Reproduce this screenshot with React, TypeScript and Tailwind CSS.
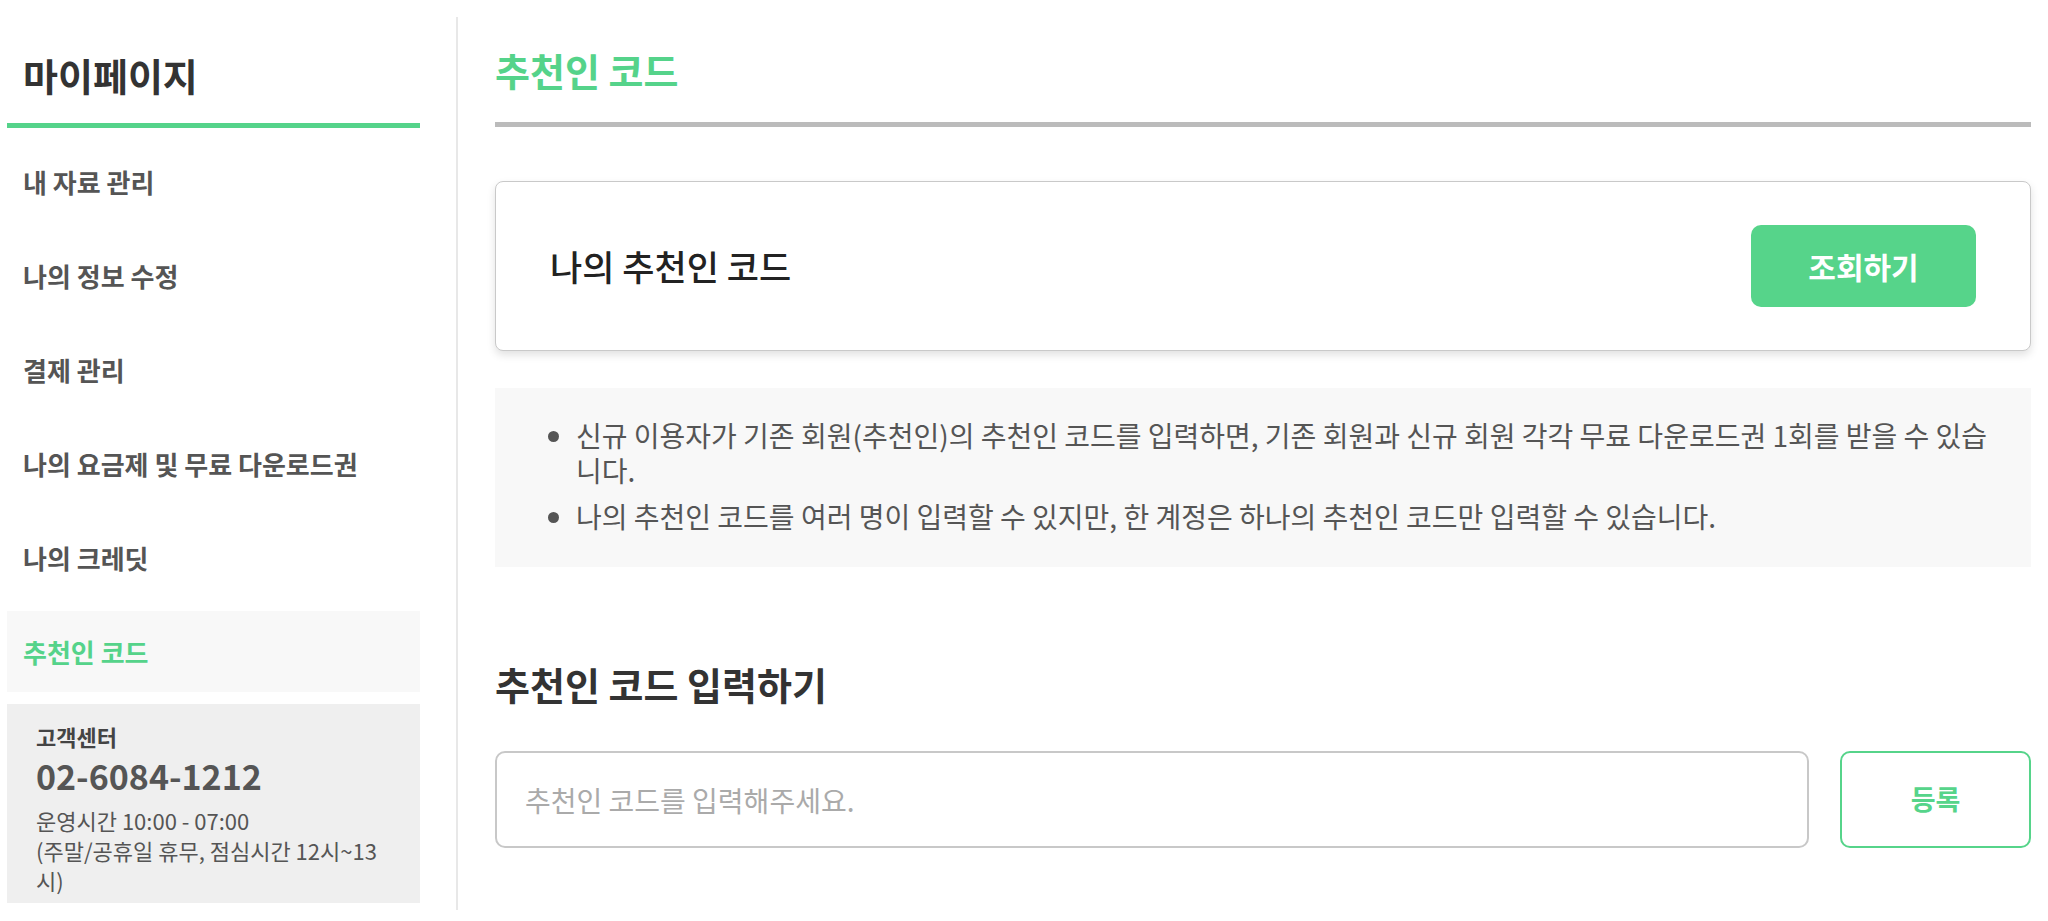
import React, { useState } from "react";

const FONT = "font-['Noto_Sans_CJK_KR','Noto_Sans',sans-serif]";

const menuItems = [
  "내 자료 관리",
  "나의 정보 수정",
  "결제 관리",
  "나의 요금제 및 무료 다운로드권",
  "나의 크레딧",
  "추천인 코드",
];

const Sidebar = ({ active }: { active: string }) => {
  return (
    <aside className="ml-[7px] mt-[17px] mb-[11px] w-[451px] shrink-0 border-r-2 border-[#e8e8e8] pr-[36px]">
      <div className="pt-[35px] pb-[25px] pl-[16px]">
        <h1 className="text-[38px] leading-[46px] font-bold text-[#333]">
          마이페이지
        </h1>
      </div>
      <div className="h-[5px] bg-[#55d38a]" />
      <ul className="flex flex-col gap-[13px] pt-[13px]">
        {menuItems.map((item) => (
          <li
            key={item}
            className={
              item === active
                ? "flex h-[81px] items-center bg-[#f8f8f8] pl-[16px] text-[26px] font-bold text-[#55d38a]"
                : "flex h-[81px] items-center pl-[16px] text-[26px] font-bold text-[#555]"
            }
          >
            {item}
          </li>
        ))}
      </ul>
      <div className="mt-[12px] h-[199px] bg-[#efefef] pl-[29px] pr-[10px] pt-[18px]">
        <p className="text-[22px] leading-[28px] font-bold text-[#444]">
          고객센터
        </p>
        <p className="mt-[4px] text-[34px] leading-[44px] font-bold text-[#555]">
          02-6084-1212
        </p>
        <p className="mt-[7px] text-[22px] leading-[30px] text-[#555]">
          운영시간 10:00 - 07:00
          <br />
          (주말/공휴일 휴무, 점심시간 12시~13
          <br />
          시)
        </p>
      </div>
    </aside>
  );
};

const App = () => {
  const [code, setCode] = useState("");

  return (
    <div className={`flex min-h-[921px] w-full bg-white ${FONT}`}>
      <Sidebar active="추천인 코드" />
      <main className="ml-[37px] mr-[17px] flex-1 pt-[47px]">
        <h2 className="text-[38px] leading-[45px] font-bold text-[#55d38a]">
          추천인 코드
        </h2>
        <div className="mt-[30px] h-[5px] bg-[#bbbbbb]" />

        <div className="mt-[54px] flex h-[170px] items-center justify-between rounded-[8px] border border-[#c9c9c9] bg-white px-[54px] shadow-[0_4px_8px_rgba(0,0,0,0.12)]">
          <span className="text-[35px] font-medium text-[#222]">
            나의 추천인 코드
          </span>
          <button className="h-[82px] w-[225px] rounded-[10px] bg-[#56d48a] text-[30px] font-bold text-white">
            조회하기
          </button>
        </div>

        <div className="mt-[37px] h-[179px] bg-[#f8f8f8] pt-[30px] pr-[24px]">
          <ul className="list-disc pl-[81px] text-[28px] leading-[35px] text-[#555]">
            <li>
              신규 이용자가 기존 회원(추천인)의 추천인 코드를 입력하면, 기존
              회원과 신규 회원 각각 무료 다운로드권 1회를 받을 수 있습
              <br />
              니다.
            </li>
            <li className="mt-[11px]">
              나의 추천인 코드를 여러 명이 입력할 수 있지만, 한 계정은 하나의
              추천인 코드만 입력할 수 있습니다.
            </li>
          </ul>
        </div>

        <h3 className="mt-[94px] text-[38px] leading-[45px] font-bold text-[#333]">
          추천인 코드 입력하기
        </h3>
        <div className="mt-[45px] flex gap-[31px]">
          <input
            value={code}
            onChange={(e) => setCode(e.target.value)}
            placeholder="추천인 코드를 입력해주세요."
            className="h-[97px] flex-1 rounded-[10px] border-2 border-[#c8c8c8] px-[28px] text-[28px] text-[#333] outline-none placeholder:text-[#aaaaaa]"
          />
          <button className="h-[97px] w-[191px] rounded-[10px] border-2 border-[#56d48a] bg-white text-[27px] font-bold text-[#56d48a]">
            등록
          </button>
        </div>
      </main>
    </div>
  );
};

export default App;
